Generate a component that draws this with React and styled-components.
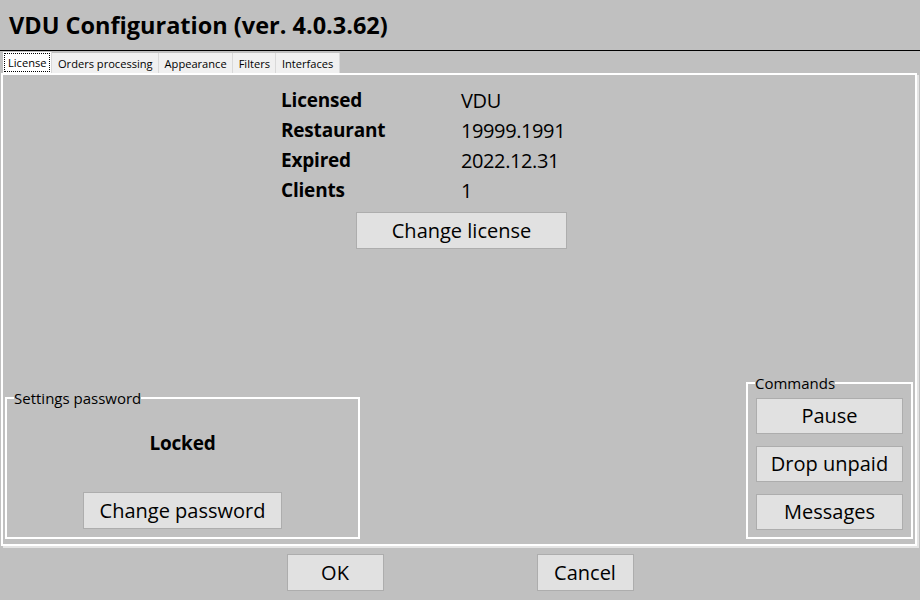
import React from "react";
import styled, { createGlobalStyle } from "styled-components";

const GlobalStyle = createGlobalStyle`
  html, body {
    margin: 0;
    padding: 0;
    background: #c0c0c0;
  }
  * {
    box-sizing: border-box;
  }
`;

const FONT = `"Open Sans", "Noto Sans", sans-serif`;

const tabs = ["License", "Orders processing", "Appearance", "Filters", "Interfaces"];

const info = [
  ["Licensed", "VDU"],
  ["Restaurant", "19999.1991"],
  ["Expired", "2022.12.31"],
  ["Clients", "1"],
];

export default function App() {
  return (
    <>
      <GlobalStyle />
      <Window>
        <Title>VDU Configuration (ver. 4.0.3.62)</Title>
        <TabBar>
          {tabs.map((t, i) => (
            <Tab key={t} active={i === 0}>
              {i === 0 ? <Focus>{t}</Focus> : t}
            </Tab>
          ))}
        </TabBar>
        <Panel>
          <InfoSection>
            <InfoGrid>
              {info.map(([k, v]) => (
                <React.Fragment key={k}>
                  <Label>{k}</Label>
                  <Value>{v}</Value>
                </React.Fragment>
              ))}
            </InfoGrid>
            <LicenseButton width={211}>Change license</LicenseButton>
          </InfoSection>
          <BottomRow>
            <Group width={355} height={150}>
              <Legend>Settings password</Legend>
              <PasswordBody>
                <Locked>Locked</Locked>
                <Button width={199}>Change password</Button>
              </PasswordBody>
            </Group>
            <Group width={167} height={165}>
              <Legend>Commands</Legend>
              <CommandList>
                <Button width={147} height={36}>Pause</Button>
                <Button width={147} height={36}>Drop unpaid</Button>
                <Button width={147} height={36}>Messages</Button>
              </CommandList>
            </Group>
          </BottomRow>
        </Panel>
        <Footer>
          <Button width={97}>OK</Button>
          <Button width={97}>Cancel</Button>
        </Footer>
      </Window>
    </>
  );
}

const Window = styled.div`
  width: 920px;
  height: 600px;
  display: flex;
  flex-direction: column;
  background: #c0c0c0;
  font-family: ${FONT};
  color: #000;
  overflow: hidden;
`;

const Title = styled.h1`
  margin: 0;
  height: 51px;
  padding: 9px 0 0 9px;
  font-size: 23.5px;
  font-weight: 700;
  line-height: 32px;
  border-bottom: 1px solid #000;
`;

const TabBar = styled.div`
  display: flex;
  align-items: flex-end;
  height: 22px;
  padding-left: 3px;
`;

const Tab = styled.div`
  height: ${(p) => (p.active ? "21px" : "20px")};
  padding: 0 ${(p) => (p.active ? "1px" : "5.5px")};
  display: flex;
  align-items: center;
  font-size: 11.1px;
  background: ${(p) => (p.active ? "#ffffff" : "#f0f0f0")};
  border-right: 1px solid #d9d9d9;
  white-space: nowrap;
`;

const Focus = styled.span`
  border: 1px dotted #000;
  padding: 1px 3px;
  line-height: 15px;
`;

const Panel = styled.div`
  flex: 1;
  margin: 0 3px 0 1px;
  border: 2px solid #fff;
  box-shadow: 2px 2px 0 #e4e4e4;
  display: flex;
  flex-direction: column;
  justify-content: space-between;
`;

const InfoSection = styled.div`
  padding: 10px 0 0 278px;
  display: flex;
  flex-direction: column;
  align-items: flex-start;
  gap: 7px;
`;

const InfoGrid = styled.div`
  display: grid;
  grid-template-columns: 180px auto;
  grid-auto-rows: 30px;
  align-items: center;
`;

const Label = styled.div`
  font-size: 19px;
  font-weight: 700;
  letter-spacing: -0.2px;
`;

const Value = styled.div`
  font-size: 20px;
  font-weight: 400;
  letter-spacing: -0.4px;
`;

const Button = styled.button`
  width: ${(p) => p.width}px;
  height: ${(p) => p.height || 37}px;
  background: #e1e1e1;
  border: 1px solid #adadad;
  font-family: ${FONT};
  font-size: 20px;
  color: #000;
  padding: 0;
  line-height: 1;
`;

const LicenseButton = styled(Button)`
  margin-left: 75px;
`;

const BottomRow = styled.div`
  display: flex;
  justify-content: space-between;
  align-items: flex-end;
  padding: 0 2px 5px 2px;
`;

const Group = styled.fieldset`
  width: ${(p) => p.width}px;
  height: ${(p) => p.height}px;
  margin: 0;
  padding: 0;
  border: 2px solid #fff;
  display: flex;
  flex-direction: column;
`;

const Legend = styled.legend`
  font-size: 15px;
  padding: 0;
  margin-left: 7px;
  line-height: 18px;
`;

const PasswordBody = styled.div`
  flex: 1;
  display: flex;
  flex-direction: column;
  align-items: center;
  justify-content: space-between;
  padding: 23px 0 8px;
`;

const Locked = styled.div`
  font-size: 19px;
  font-weight: 700;
  letter-spacing: -0.2px;
`;

const CommandList = styled.div`
  display: flex;
  flex-direction: column;
  gap: 12px;
  padding: 6px 0 6px 8px;
`;

const Footer = styled.div`
  height: 54px;
  display: flex;
  justify-content: center;
  gap: 153px;
  padding-top: 8px;
`;
